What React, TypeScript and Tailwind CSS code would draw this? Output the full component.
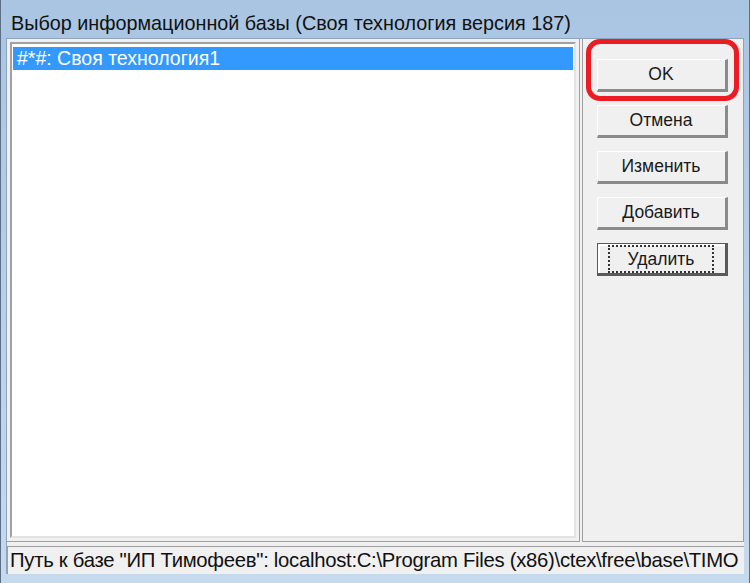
import React from 'react';

const FONT = { fontFamily: '"Liberation Sans", Arial, sans-serif' };

const buttons = ['OK', 'Отмена', 'Изменить', 'Добавить', 'Удалить'];

function WinButton({ label, isDefault }: { label: string; isDefault?: boolean }) {
  return (
    <div
      className={`w-[131px] h-[33px] flex items-center justify-center bg-[#f0f0f0] border text-[17.5px] text-[#1a1a1a] ${
        isDefault
          ? 'border-[#5a5a5a] border-b-[3px] border-r-[3px] shadow-[inset_2px_2px_0_#fff]'
          : 'border-t-[#fff] border-l-[#fff] border-r-[#8a8a8a] border-b-[#8a8a8a] border-r-[3px] border-b-[3px]'
      }`}
    >
      {isDefault ? (
        <span className="px-[18px] py-[2px] border-2 border-dotted border-[#333] leading-[20px]">{label}</span>
      ) : (
        <span>{label}</span>
      )}
    </div>
  );
}

export default function App() {
  return (
    <div
      className="w-[750px] h-[583px] flex flex-col bg-gradient-to-b from-[#a9c5e2] to-[#c6daee] border-l border-r border-[#5c6f86]"
      style={FONT}
    >
      {/* title bar */}
      <div className="h-[38px] shrink-0 flex items-end pl-[10px] pb-[4px]">
        <span className="text-[19.8px] text-[#111] leading-none">
          Выбор информационной базы (Своя технология версия 187)
        </span>
      </div>

      {/* client */}
      <div className="flex-1 flex flex-col mx-[5px] bg-[#f0f0f0] border-t border-l border-[#8fa3bb]">
        <div className="flex-1 flex">
          {/* list */}
          <div className="w-[573px] p-[3px] border-r border-b border-[#a0a0a0]">
            <div className="h-full bg-white border-2 border-t-[#a0a0a0] border-l-[#a0a0a0] border-r-[#e3e3e3] border-b-[#e3e3e3] pt-[3px] px-[1px]">
              <div className="h-[23px] bg-[#3399ff] text-white text-[19.5px] leading-[23px] pl-[4px]">
                #*#: Своя технология1
              </div>
            </div>
          </div>

          {/* buttons */}
          <div className="flex-1 ml-[2px] border-l border-r border-b border-[#a0a0a0] flex flex-col items-center pt-[20px] gap-[13px] pr-[2px]">
            <div className="relative">
              <div className="absolute -left-[11px] -top-[20px] w-[153px] h-[62px] border-[5px] border-[#ec1c24] rounded-[14px]" />
              <WinButton label={buttons[0]} />
            </div>
            {buttons.slice(1, 4).map(b => (
              <WinButton key={b} label={b} />
            ))}
            <WinButton label={buttons[4]} isDefault />
          </div>
        </div>

        {/* status bar */}
        <div className="h-[28px] mt-[4px] flex items-center border-t border-[#a0a0a0] border-l border-[#a0a0a0] overflow-hidden whitespace-nowrap pl-[2px]">
          <span className="text-[20.3px] text-[#111] tracking-[-0.28px]">
            Путь к базе "ИП Тимофеев": localhost:C:\Program Files (x86)\ctex\free\base\TIMO
          </span>
        </div>
      </div>
      <div className="h-[9px] shrink-0" />
    </div>
  );
}
